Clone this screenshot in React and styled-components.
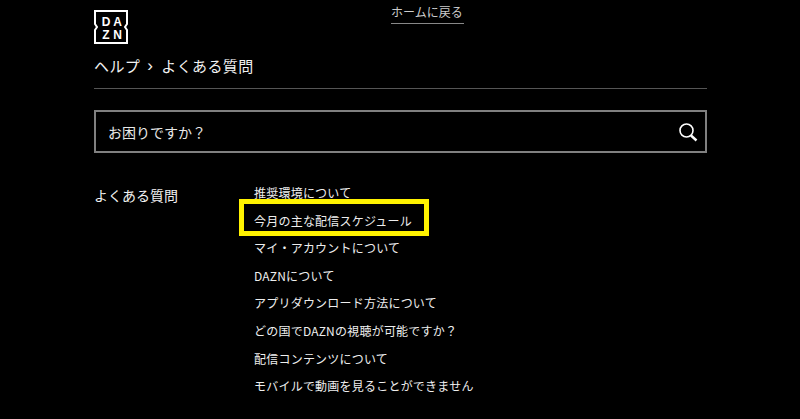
import React from 'react';
import styled, { createGlobalStyle } from 'styled-components';

const Global = createGlobalStyle`
html,body{margin:0;padding:0;background:#000;}
body{font-family:"Noto Sans CJK JP","Liberation Sans",sans-serif;color:#fff;}
`;
const Page = styled.div`
width:613px;
height:419px;
overflow:hidden;
margin-left:94px;
`;
const Header = styled.header`
display:flex;
align-items:flex-start;
height:48px;
`;
const LogoBox = styled.svg`
margin-top:10px;
width:34px;
height:34px;
display:block;
`;
const HomeLink = styled.a`
margin-left:263px;
margin-top:4px;
height:19px;
line-height:15px;
font-size:12px;
color:#ccc;
border-bottom:1px solid #888;
width:73px;
`;
const Crumbs = styled.div`
display:flex;
align-items:center;
height:35px;
padding-bottom:5px;
border-bottom:1px solid #555;
font-size:15px;
letter-spacing:.4px;
color:#f2f2f2;
`;
const Chevron = styled.span`
margin:0 8px 0 7px;
font-size:17px;
line-height:20px;
font-family:"Liberation Sans",sans-serif;
`;
const SearchBar = styled.div`
margin-top:21px;
height:39px;
border:2px solid #808080;
display:flex;
align-items:center;
justify-content:space-between;
padding:0 7px 0 12px;
font-size:14px;
color:#e8e8e8;
`;
const Body = styled.div`
display:flex;
margin-top:27px;
`;
const SideTitle = styled.div`
width:160px;
font-size:14px;
line-height:30px;
color:#f2f2f2;
`;
const Faq = styled.ul`
list-style:none;
margin:-1px 0 0;
padding:0;
`;
const Item = styled.li`
position:relative;
height:27.6px;
line-height:27.6px;
font-size:12px;
letter-spacing:.22px;
color:#eee;
white-space:nowrap;
${p => p.$marked && `
&::after{
  content:"";
  position:absolute;
  left:-15px;
  top:-8px;
  width:180px;
  height:27px;
  border:5px solid #fff200;
}`}
`;

const items = [
  '推奨環境について',
  '今月の主な配信スケジュール',
  'マイ・アカウントについて',
  'DAZNについて',
  'アプリダウンロード方法について',
  'どの国でDAZNの視聴が可能ですか？',
  '配信コンテンツについて',
  'モバイルで動画を見ることができません',
];

const Logo = () => (
  <LogoBox viewBox="0 0 34 34">
    <path d="M1 1H33V14L31 17L33 20V33H1V20L3 17L1 14Z" fill="none" stroke="#fff" strokeWidth="2" />
    <text x="12" y="15.5" fontSize="12" fontWeight="700" fill="#fff" textAnchor="middle" fontFamily="Liberation Sans">D</text>
    <text x="23.5" y="15.5" fontSize="12" fontWeight="700" fill="#fff" textAnchor="middle" fontFamily="Liberation Sans">A</text>
    <text x="12" y="29" fontSize="12" fontWeight="700" fill="#fff" textAnchor="middle" fontFamily="Liberation Sans">Z</text>
    <text x="23.5" y="29" fontSize="12" fontWeight="700" fill="#fff" textAnchor="middle" fontFamily="Liberation Sans">N</text>
  </LogoBox>
);

const SearchIcon = () => (
  <svg width="20" height="20" viewBox="0 0 20 20" fill="none" stroke="#fff">
    <circle cx="8.5" cy="8.5" r="6.5" strokeWidth="1.6" />
    <path d="M13 13.5L18.5 18.5" strokeWidth="2.4" />
  </svg>
);

export default function App() {
  return (
    <Page>
      <Global />
      <Header>
        <Logo />
        <HomeLink>ホームに戻る</HomeLink>
      </Header>
      <Crumbs>
        ヘルプ<Chevron>›</Chevron>よくある質問
      </Crumbs>
      <SearchBar>
        お困りですか？
        <SearchIcon />
      </SearchBar>
      <Body>
        <SideTitle>よくある質問</SideTitle>
        <Faq>
          {items.map((text, i) => (
            <Item key={text} $marked={i === 1}>{text}</Item>
          ))}
        </Faq>
      </Body>
    </Page>
  );
}
